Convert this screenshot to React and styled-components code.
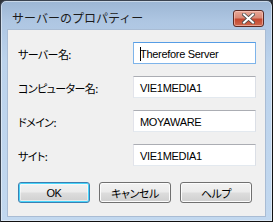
import React from "react";
import styled, { createGlobalStyle } from "styled-components";

const GlobalStyle = createGlobalStyle`
	html, body {
		margin: 0;
		padding: 0;
		background: #2e3238;
	}
	body {
		font-family: "Liberation Sans", "Noto Sans CJK JP", sans-serif;
		font-size: 11px;
		color: #000;
	}
`;

const Frame = styled.div`
	box-sizing: border-box;
	width: 273px;
	height: 222px;
	border: 1px solid #3a4350;
	border-bottom-color: #111;
	border-right-color: #111;
	border-radius: 6px 6px 0 0;
	background: linear-gradient(180deg, #9cb6d4 0px, #aec6e2 20px, #bcd3ec 60px, #c2d8ef 100%);
	box-shadow: inset 0 0 0 1px rgba(255, 255, 255, 0.45);
	display: flex;
	flex-direction: column;
	overflow: hidden;
`;

const TitleBar = styled.div`
	height: 29px;
	flex: none;
	display: flex;
	align-items: center;
	padding: 5px 8px 0 11px;
	box-sizing: border-box;
`;

const Title = styled.div`
	flex: 1;
	font-family: "Noto Sans CJK JP", sans-serif;
	font-size: 12px;
	line-height: 14px;
	color: #1b1b1b;
`;

const CloseButton = styled.div`
	width: 31px;
	height: 17px;
	box-sizing: border-box;
	border: 1px solid #5a2a24;
	border-radius: 3px;
	background: linear-gradient(180deg, #e8a898 0%, #d98a77 45%, #c4472f 55%, #cf6a4f 100%);
	box-shadow: inset 0 0 0 1px rgba(255, 210, 200, 0.55);
	display: flex;
	align-items: center;
	justify-content: center;
`;

const Client = styled.div`
	flex: 1;
	margin: 0 7px 5px 7px;
	background: #f0f0f0;
	box-shadow: 0 0 0 1px #a9bcd4;
	padding: 12px 0 0 10px;
	display: flex;
	flex-direction: column;
`;

const Form = styled.div`
	display: grid;
	grid-template-columns: 115px 123px;
	grid-auto-rows: 22px;
	row-gap: 12px;
`;

const Label = styled.div`
	display: flex;
	align-items: center;
	font-family: "Noto Sans CJK JP", sans-serif;
	font-size: 11px;
	letter-spacing: -0.6px;
	font-feature-settings: "palt" 1;
	padding-top: 1px;
	color: #000;
`;

const Field = styled.div`
	box-sizing: border-box;
	border: 1px solid;
	border-color: ${ p => p.focused ? "#569de5 #7eb4ea #7eb4ea #7eb4ea" : "#abadb3 #dbdfe6 #e3e9ef #e2e3ea" };
	background: #fff;
	display: flex;
	align-items: center;
	padding: 1px 0 0 6px;
	font-size: 11px;
	letter-spacing: -0.3px;
	white-space: nowrap;
`;

const Caret = styled.span`
	display: inline-block;
	width: 1px;
	height: 14px;
	background: #000;
	margin-right: -1px;
`;

const Buttons = styled.div`
	display: flex;
	gap: 9px;
	margin-top: 16px;
`;

const Button = styled.div`
	box-sizing: border-box;
	width: 72px;
	height: 21px;
	border: 1px solid ${ p => p.primary ? "#3c7fb1" : "#707070" };
	border-radius: 3px;
	background: linear-gradient(180deg, #f2f2f2 0%, #ebebeb 48%, #dddddd 52%, #cfcfcf 100%);
	box-shadow: ${ p => p.primary ? "inset 0 0 0 1px #48d5fb, inset 0 0 0 2px rgba(255,255,255,0.5)" : "inset 0 0 0 1px #fcfcfc" };
	display: flex;
	align-items: center;
	justify-content: center;
	font-family: "Liberation Sans", "Noto Sans CJK JP", sans-serif;
	font-feature-settings: "palt" 1;
	letter-spacing: -0.4px;
	font-size: 11px;
	color: #000;
`;

const CloseIcon = () => (
	<svg width="13" height="11" viewBox="0 0 13 11">
		<path d="M2 1.5 L11 9.5 M11 1.5 L2 9.5" stroke="#4a4a4a" strokeWidth="3.6" strokeLinecap="square" />
		<path d="M2 1.5 L11 9.5 M11 1.5 L2 9.5" stroke="#ffffff" strokeWidth="2" strokeLinecap="square" />
	</svg>
);

const rows = [
	{ label: "サーバー名:", value: "Therefore Server", focused: true },
	{ label: "コンピューター名:", value: "VIE1MEDIA1" },
	{ label: "ドメイン:", value: "MOYAWARE" },
	{ label: "サイト:", value: "VIE1MEDIA1" },
];

export default function App() {
	return <>
		<GlobalStyle />
		<Frame>
			<TitleBar>
				<Title>サーバーのプロパティー</Title>
				<CloseButton><CloseIcon /></CloseButton>
			</TitleBar>
			<Client>
				<Form>
					{ rows.map( row => <React.Fragment key={ row.label }>
						<Label>{ row.label }</Label>
						<Field focused={ row.focused }>
							{ row.focused && <Caret /> }
							{ row.value }
						</Field>
					</React.Fragment> ) }
				</Form>
				<Buttons>
					<Button primary>OK</Button>
					<Button>キャンセル</Button>
					<Button>ヘルプ</Button>
				</Buttons>
			</Client>
		</Frame>
	</>;
}
